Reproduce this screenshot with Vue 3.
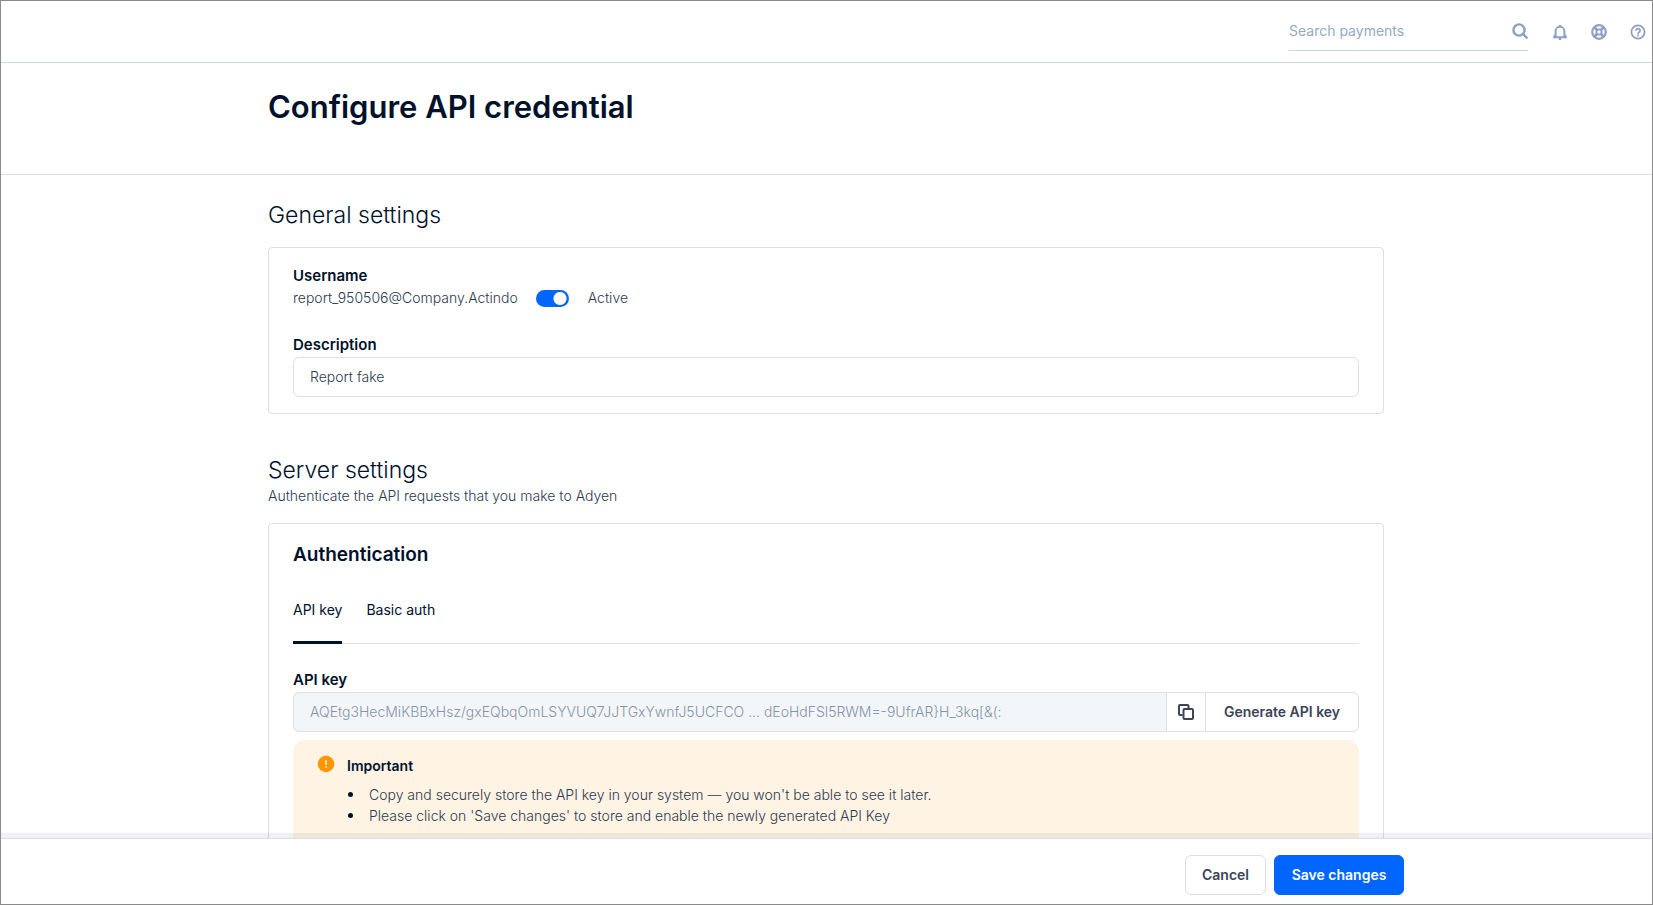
<script setup>
import { ref } from 'vue'

const search = ref('')
const active = ref(true)
const description = ref('Report fake')
const apiKey = ref('AQEtg3HecMiKBBxHsz/gxEQbqOmLSYVUQ7JJTGxYwnfJ5UCFCO ... dEoHdFSl5RWM=-9UfrAR}H_3kq[&(:')
const tabs = ['API key', 'Basic auth']
const currentTab = ref('API key')
const notes = [
  "Copy and securely store the API key in your system — you won't be able to see it later.",
  "Please click on 'Save changes' to store and enable the newly generated API Key",
]
</script>

<template>
  <div class="page">
    <header class="topbar">
      <form class="search" role="search" @submit.prevent>
        <input v-model="search" type="text" placeholder="Search payments" aria-label="Search payments" />
        <button type="submit" class="icon-btn" aria-label="Search">
          <svg width="16" height="16" viewBox="0 0 16 16" fill="none" stroke="currentColor" stroke-width="2.4">
            <circle cx="7" cy="7" r="5.6" />
            <path d="M11 11l4.4 4.4" />
          </svg>
        </button>
      </form>
      <button type="button" class="icon-btn" aria-label="Notifications">
        <svg width="16" height="16" viewBox="0 0 16 16" fill="none" stroke="currentColor" stroke-width="2">
          <path d="M3.6 12.600V7.200a4.400 4.400 0 0 1 8.800 0v5.400M1.200 13.300h13.600" />
          <path d="M3.600 10.400l-1.800 2.400M12.400 10.400l1.800 2.400" stroke-width="1.600" />
          <path d="M8 1v2M8 13.500v2.500" stroke-width="2.400" />
        </svg>
      </button>
      <button type="button" class="icon-btn" aria-label="Support">
        <svg width="16" height="16" viewBox="0 0 16 16" fill="none" stroke="currentColor">
          <circle cx="8" cy="8" r="6.800" stroke-width="2.200" />
          <circle cx="8" cy="8" r="2.600" stroke-width="1.900" />
          <path d="M3.300 3.300L6 6M10 10l2.700 2.700M12.700 3.300L10 6M6 10l-2.700 2.700" stroke-width="2.800" />
        </svg>
      </button>
      <button type="button" class="icon-btn" aria-label="Help">
        <svg width="16" height="16" viewBox="0 0 16 16" fill="none" stroke="currentColor" stroke-width="1.800">
          <circle cx="8" cy="8" r="6.600" />
          <path d="M6 6.700a2 2 0 1 1 3.100 1.600c-.8.5-1.100.7-1.100 1.400" />
          <path d="M8 10.600v1.600" />
        </svg>
      </button>
    </header>

    <div class="title-band">
      <h1 class="container">Configure API credential</h1>
    </div>

    <main class="content">
      <div class="container">
        <h2>General settings</h2>
        <section class="card">
          <div class="label">Username</div>
          <div class="user-row">
            <span>report_950506@Company.Actindo</span>
            <label class="switch">
              <input v-model="active" type="checkbox" role="switch" />
              <span>Active</span>
            </label>
          </div>
          <label class="label" for="description">Description</label>
          <input id="description" v-model="description" class="field" type="text" />
        </section>

        <h2 class="server-title">Server settings</h2>
        <p class="subtitle">Authenticate the API requests that you make to Adyen</p>
        <section class="card auth-card">
          <h3>Authentication</h3>
          <div class="tabs" role="tablist">
            <button
              v-for="tab in tabs"
              :key="tab"
              type="button"
              role="tab"
              :aria-selected="tab === currentTab"
              :class="['tab', { selected: tab === currentTab }]"
              @click="currentTab = tab"
            >{{ tab }}</button>
          </div>
          <label class="label" for="api-key">API key</label>
          <div class="key-row">
            <input id="api-key" class="field key-field" type="text" :value="apiKey" readonly />
            <button type="button" class="btn copy" aria-label="Copy API key">
              <svg width="16" height="16" viewBox="0 0 16 16" fill="none" stroke="currentColor" stroke-width="2">
                <rect x="5.500" y="5" width="9.500" height="10" rx="1" />
                <path d="M4.500 11H2a1 1 0 0 1-1-1V2a1 1 0 0 1 1-1h7.500a1 1 0 0 1 1 1v2" />
              </svg>
            </button>
            <button type="button" class="btn generate">Generate API key</button>
          </div>
          <aside class="notice">
            <svg class="warn" width="18" height="18" viewBox="0 0 18 18">
              <circle cx="9" cy="9" r="8.300" fill="#ff9500" />
              <path d="M9 5v5M9 11.300v1.700" stroke="#fff3e4" stroke-width="1.500" />
            </svg>
            <div>
              <strong>Important</strong>
              <ul>
                <li v-for="note in notes" :key="note">{{ note }}</li>
              </ul>
            </div>
          </aside>
        </section>
      </div>
    </main>

    <footer class="actions">
      <div class="actions-inner">
        <button type="button" class="btn">Cancel</button>
        <button type="button" class="btn primary">Save changes</button>
      </div>
    </footer>
  </div>
</template>

<style>
body {
  margin: 0;
}
</style>

<style scoped>
.page,
.page * {
  box-sizing: border-box;
}
.page {
  display: flex;
  flex-direction: column;
  height: 100vh;
  border: 1px solid #8a8a8a;
  background: #fff;
  color: #00112c;
  font: 300 14px/20px Inter, "Liberation Sans", sans-serif;
  overflow: hidden;
}
button,
input {
  margin: 0;
  font: inherit;
  color: inherit;
}
button {
  padding: 0;
  border: 0;
  background: none;
  cursor: pointer;
}
svg {
  display: block;
}
.container {
  width: 100%;
  max-width: 1116px;
  margin: 0 auto;
}
.topbar {
  display: flex;
  flex: none;
  align-items: center;
  justify-content: flex-end;
  gap: 23px;
  height: 62px;
  padding-right: 6px;
  border-bottom: 1px solid #cdd6de;
}
.search {
  display: flex;
  align-items: center;
  width: 239px;
  height: 38px;
  margin-right: 1px;
  border-bottom: 1px solid #cdd6de;
}
.search input {
  flex: 1;
  min-width: 0;
  padding: 0;
  border: 0;
  outline: 0;
  font-weight: 400;
}
.search input::placeholder {
  color: #99a8c8;
  opacity: 1;
}
.icon-btn {
  color: #8fa0c4;
}
.title-band {
  flex: none;
  height: 112px;
  padding-top: 24px;
  padding-right: 1px;
  border-bottom: 1px solid #dcdee3;
}
h1,
h2,
h3,
p,
ul {
  margin: 0;
  padding: 0;
}
h1 {
  font-size: 31px;
  line-height: 40px;
  font-weight: 600;
}
.content {
  flex: 1;
  min-height: 0;
  padding-top: 24px;
  padding-right: 1px;
  overflow: hidden;
}
h2 {
  font-size: 23px;
  line-height: 32px;
  font-weight: 300;
}
.card {
  margin-top: 16px;
  padding: 18px 24px 16px;
  border: 1px solid #dcdee3;
  border-radius: 4px;
}
.auth-card {
  margin-top: 17px;
}
.label {
  display: block;
  font-size: 15px;
  line-height: 20px;
  font-weight: 600;
}
.user-row {
  display: flex;
  align-items: center;
  height: 24px;
  margin-bottom: 25px;
  gap: 18px;
  color: #2c3a51;
}
.switch {
  display: flex;
  align-items: center;
  gap: 19px;
}
.switch input {
  width: 33px;
  height: 17px;
  border-radius: 9px;
  appearance: none;
  background: radial-gradient(circle at 9px 50%, #fff 6px, transparent 7px) #8d95a3;
}
.switch input:checked {
  background: radial-gradient(circle at 24px 50%, #fff 6px, transparent 7px) #06f;
}
.field {
  width: 100%;
  height: 40px;
  margin-top: 2px;
  padding: 0 16px 1px;
  border: 1px solid #dcdee3;
  border-radius: 6px;
  background: #fff;
  color: #2c3a51;
  outline: 0;
}
.server-title {
  margin-top: 40px;
}
.subtitle {
  color: #2c3a51;
}
h3 {
  font-size: 19px;
  line-height: 26px;
  font-weight: 600;
}
.tabs {
  display: flex;
  gap: 24px;
  margin: 30px 0 26px;
  box-shadow: inset 0 -1px #dcdee3;
}
.tab {
  height: 46px;
  padding-bottom: 20px;
  border-bottom: 3px solid transparent;
  font-weight: 400;
}
.selected {
  border-color: #00112c;
}
.key-row {
  display: flex;
  margin-top: 2px;
}
.key-field {
  flex: 1;
  min-width: 0;
  margin: 0;
  border-radius: 6px 0 0 6px;
  background: #f3f6f9;
  color: #8793a5;
}
.btn {
  min-width: 81px;
  height: 40px;
  padding: 0 15px;
  border: 1px solid #dcdee3;
  border-radius: 6px;
  background: #fff;
  color: #3b4459;
  font-weight: 600;
}
.copy {
  min-width: 38px;
  padding: 0 11px;
  border-width: 1px 0;
  border-radius: 0;
}
.generate {
  min-width: 154px;
  border-radius: 0 6px 6px 0;
}
.notice {
  display: flex;
  gap: 12px;
  height: 128px;
  margin-top: 8px;
  padding: 15px 24px;
  border-radius: 12px;
  background: #fff3e4;
}
.warn {
  flex: none;
}
.notice strong {
  display: block;
  line-height: 22px;
  font-weight: 600;
}
.notice ul {
  margin-top: 7px;
  list-style: none;
}
.notice li {
  display: flex;
  align-items: center;
  gap: 16px;
  padding-left: 1px;
  line-height: 21px;
  color: #2c3a51;
}
.notice li::before {
  content: "";
  width: 5px;
  height: 5px;
  border-radius: 50%;
  background: #00112c;
}
.actions {
  position: relative;
  flex: none;
  padding: 16px 1px 9px 0;
  border-top: 1px solid #dcdee3;
  background: #fff;
  box-shadow: 0 -5px 0 rgba(0, 17, 44, 0.06);
}
.actions-inner {
  display: flex;
  justify-content: flex-end;
  gap: 8px;
  width: 100%;
  max-width: 1156px;
  margin: 0 auto;
}
.primary {
  min-width: 130px;
  border-color: #06f;
  background: #06f;
  color: #fff;
}
</style>
